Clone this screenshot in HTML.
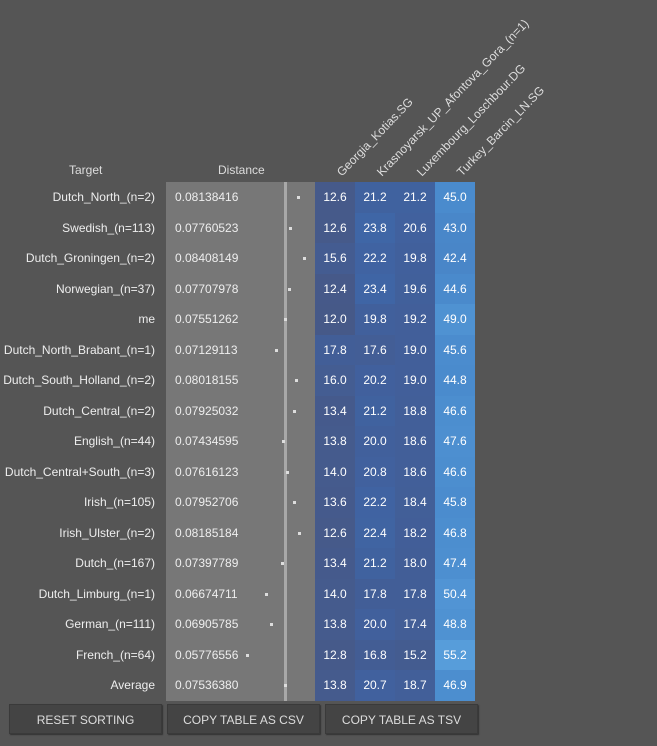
<!DOCTYPE html>
<html><head><style>
body{margin:0;width:657px;height:746px;background:#555;font-family:"Liberation Sans",Arial,sans-serif;font-size:12px;color:#eee;position:relative;overflow:hidden}
.h{position:absolute;white-space:nowrap;transform-origin:0 100%;transform:rotate(-46deg);font-size:12px;color:#ddd;line-height:14px}
.row{position:absolute;left:0;height:31px;width:480px}
.row .lbl{position:absolute;left:0;width:155px;text-align:right;top:0;line-height:31px;color:#eee}
.dist{position:absolute;left:166px;width:149px;height:100%;background:#777}
.dist span{position:absolute;left:9px;line-height:31px;color:#eee}
.vl{position:absolute;left:284px;width:3px;height:100%;background:#a8a8a8}
.dot{position:absolute;width:3px;height:3px;background:#ddd;top:14px}
.c{position:absolute;width:40px;height:100%;text-align:center;line-height:31px;color:#fff}
.btn{position:absolute;top:704px;height:30px;width:153px;background:#444;border:1px solid #3a3a3a;box-shadow:1px 1px 1px #333;text-align:center;line-height:30px;color:#ddd;font-size:12px;box-sizing:border-box}
</style></head><body>
<div style="position:absolute;left:69px;top:163px;color:#ddd">Target</div>
<div style="position:absolute;left:218px;top:163px;color:#ddd">Distance</div>
<div class="h" style="left:344px;top:165px">Georgia_Kotias.SG</div>
<div class="h" style="left:384px;top:165px">Krasnoyarsk_UP_Afontova_Gora_(n=1)</div>
<div class="h" style="left:424px;top:165px">Luxembourg_Loschbour.DG</div>
<div class="h" style="left:464px;top:165px">Turkey_Barcin_LN.SG</div>
<div id="t"></div>
<div class="btn" style="left:9px">RESET SORTING</div>
<div class="btn" style="left:167px">COPY TABLE AS CSV</div>
<div class="btn" style="left:325px">COPY TABLE AS TSV</div>
<script>
var R=[["Dutch_North_(n=2)","0.08138416",12.6,21.2,21.2,45.0],
["Swedish_(n=113)","0.07760523",12.6,23.8,20.6,43.0],
["Dutch_Groningen_(n=2)","0.08408149",15.6,22.2,19.8,42.4],
["Norwegian_(n=37)","0.07707978",12.4,23.4,19.6,44.6],
["me","0.07551262",12.0,19.8,19.2,49.0],
["Dutch_North_Brabant_(n=1)","0.07129113",17.8,17.6,19.0,45.6],
["Dutch_South_Holland_(n=2)","0.08018155",16.0,20.2,19.0,44.8],
["Dutch_Central_(n=2)","0.07925032",13.4,21.2,18.8,46.6],
["English_(n=44)","0.07434595",13.8,20.0,18.6,47.6],
["Dutch_Central+South_(n=3)","0.07616123",14.0,20.8,18.6,46.6],
["Irish_(n=105)","0.07952706",13.6,22.2,18.4,45.8],
["Irish_Ulster_(n=2)","0.08185184",12.6,22.4,18.2,46.8],
["Dutch_(n=167)","0.07397789",13.4,21.2,18.0,47.4],
["Dutch_Limburg_(n=1)","0.06674711",14.0,17.8,17.8,50.4],
["German_(n=111)","0.06905785",13.8,20.0,17.4,48.8],
["French_(n=64)","0.05776556",12.8,16.8,15.2,55.2],
["Average","0.07536380",13.8,20.7,18.7,46.9]];
var S=[[12,[70,89,136]],[20,[65,96,156]],[24,[63,102,166]],[45,[74,139,205]],[56,[88,158,219]]];
function col(v){for(var i=0;i<S.length-1;i++){if(v<=S[i+1][0]){var a=S[i],b=S[i+1],f=Math.max(0,(v-a[0])/(b[0]-a[0]));return "rgb("+a[1].map(function(x,k){return Math.round(x+(b[1][k]-x)*f)}).join(",")+")"}}return "rgb(88,158,219)"}
var h="";R.forEach(function(r,i){var y=182+i*30.5;var dx=246+(parseFloat(r[1])-0.05777)*2167;
h+='<div class="row" style="top:'+y+'px"><div class="lbl">'+r[0]+'</div><div class="dist"><span>'+r[1]+'</span></div><div class="vl"></div><div class="dot" style="left:'+Math.round(dx)+'px"></div>';
for(var k=0;k<4;k++)h+='<div class="c" style="left:'+(315+k*40)+'px;background:'+col(r[2+k])+'">'+r[2+k].toFixed(1)+'</div>';
h+='</div>'});document.getElementById("t").innerHTML=h;
</script>
</body></html>
